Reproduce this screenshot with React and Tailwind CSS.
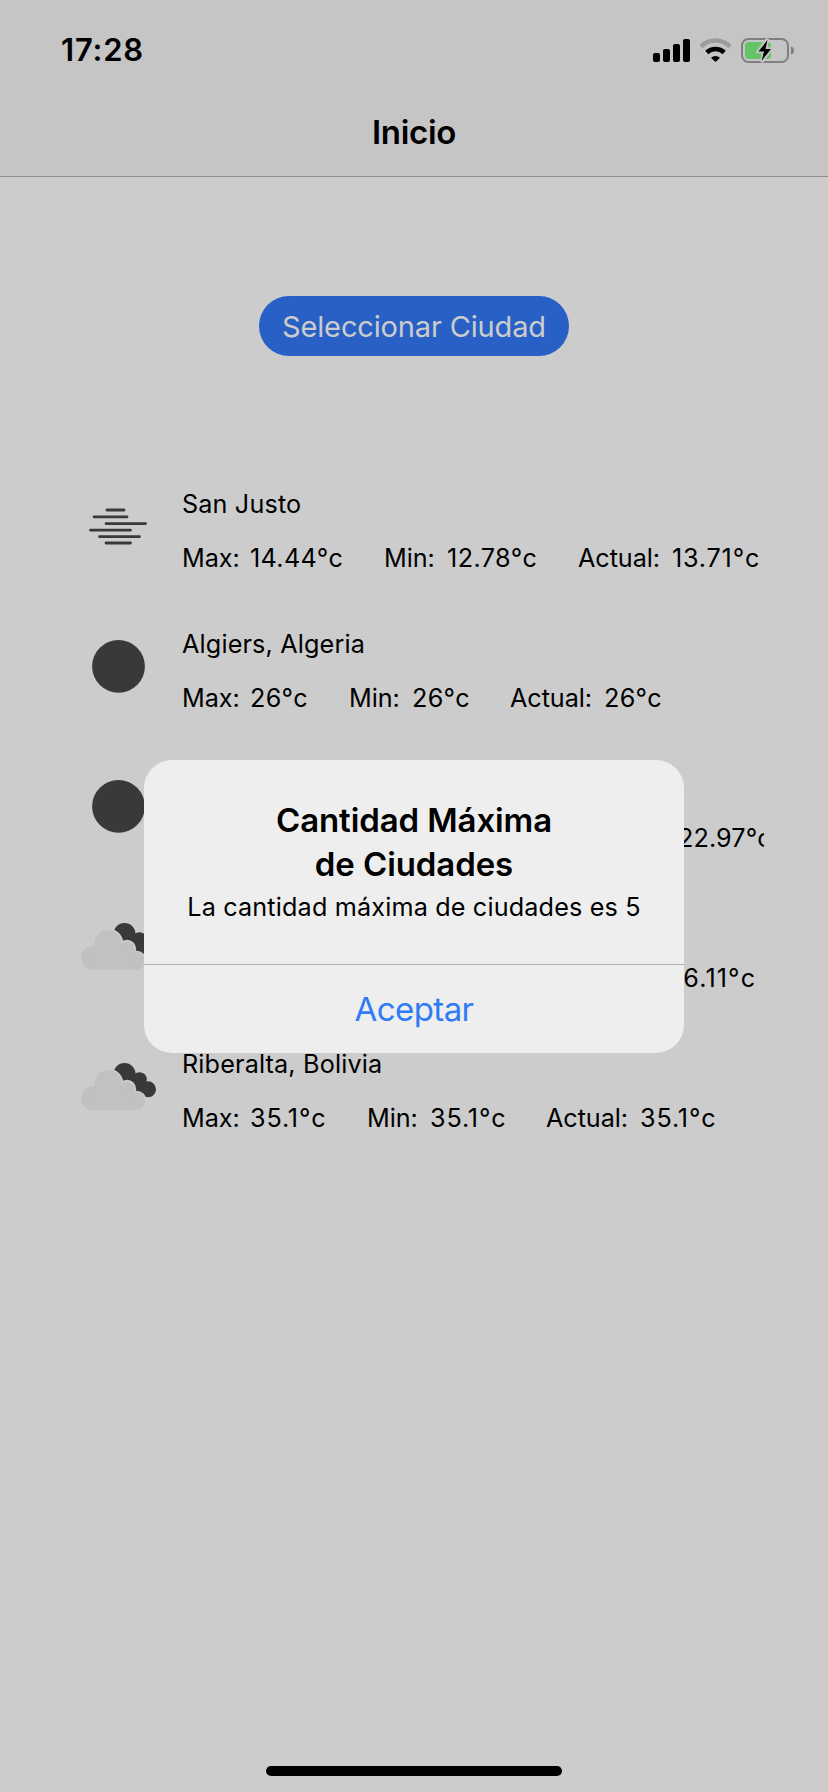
const cities = [
  {
    name: "San Justo",
    icon: "mist",
    readings: [
      { label: "Max", value: "14.44", width: "w-[134px]", tracking: "tracking-[0.35px]" },
      { label: "Min", value: "12.78", width: "w-[131px]", tracking: "tracking-[0.4px]" },
      { label: "Actual", value: "13.71", width: "w-[133px]", tracking: "tracking-[0.8px]" },
    ],
  },
  {
    name: "Algiers, Algeria",
    icon: "moon",
    readings: [
      { label: "Max", value: "26", width: "w-[99px]", tracking: "tracking-[0.3px]" },
      { label: "Min", value: "26", width: "w-[98px]", tracking: "tracking-[0.3px]" },
      { label: "Actual", value: "26", width: "w-[100px]", tracking: "tracking-[0.3px]" },
    ],
  },
  {
    name: "Madrid, España",
    icon: "moon",
    readings: [
      { label: "Max", value: "23.89", width: "w-[136px]", tracking: "tracking-[0.1px]" },
      { label: "Min", value: "22.22", width: "w-[135px]", tracking: "tracking-[0.1px]" },
      { label: "Actual", value: "22.97", width: "w-[133px]", tracking: "tracking-[0.1px]" },
    ],
  },
  {
    name: "Londres, Inglaterra",
    icon: "clouds",
    readings: [
      { label: "Max", value: "17.22", width: "w-[133px]", tracking: "tracking-[0.4px]" },
      { label: "Min", value: "15.56", width: "w-[132px]", tracking: "tracking-[0.4px]" },
      { label: "Actual", value: "16.11", width: "w-[131px]", tracking: "tracking-[1.1px]" },
    ],
  },
  {
    name: "Riberalta, Bolivia",
    icon: "clouds",
    readings: [
      { label: "Max", value: "35.1", width: "w-[117px]", tracking: "tracking-[0.85px]" },
      { label: "Min", value: "35.1", width: "w-[116px]", tracking: "tracking-[0.85px]" },
      { label: "Actual", value: "35.1", width: "w-[118px]", tracking: "tracking-[0.85px]" },
    ],
  },
];

const labelWidths = { Max: "w-[68px]", Min: "w-[63px]", Actual: "w-[94px]" };

function WeatherIcon({ kind }) {
  return (
    <svg className="size-[100px] shrink-0" viewBox="0 0 100 100">
      {kind === "mist" && (
        <path
          d="M39 34H56M26 40.800H59M38 47.600H77.500M22.500 54.200H62.500M31.500 60.600H71.500M38 67H62.500"
          stroke="#39393b"
          strokeWidth="2.8"
          strokeLinecap="round"
        />
      )}
      {kind === "moon" && <circle cx="50.5" cy="50.4" r="26.4" fill="#39393b" />}
      {kind === "clouds" && (
        <>
          <g fill="#39393b">
            <circle cx="56.5" cy="38" r="11" />
            <circle cx="71.500" cy="43.500" r="7.300" />
            <circle cx="80" cy="53.300" r="8" />
            <path d="M60 32L68 42L78 45.500L80 61L70 60L52 46Z" />
          </g>
          <g fill="#cccccc">
            <circle cx="40.500" cy="47.500" r="14.800" />
            <circle cx="59" cy="53" r="9.200" />
            <circle cx="68.500" cy="65" r="10.200" />
          </g>
          <g fill="#c1c1bf">
            <circle cx="25" cy="62" r="12" />
            <circle cx="40" cy="47.500" r="13.400" />
            <circle cx="58.700" cy="54" r="8" />
            <circle cx="68" cy="65" r="9" />
            <path d="M25 74L27 50L52 50L66 58L68 74Z" />
          </g>
        </>
      )}
    </svg>
  );
}

function Reading({ label, value, width, tracking }) {
  return (
    <div className="flex shrink-0">
      <span className={`${labelWidths[label]} shrink-0 tracking-[-0.05px]`}>{label}:</span>
      <span className={`${width} ${tracking} shrink-0`}>{value}°c</span>
    </div>
  );
}

function StatusIcons() {
  return (
    <svg className="h-[30px] w-[150px]" viewBox="650 34 150 30">
      <rect x="653" y="52" width="7" height="9" rx="2" />
      <rect x="663" y="48" width="7" height="13" rx="2" />
      <rect x="673" y="43" width="7" height="18" rx="2" />
      <rect x="683" y="38" width="7" height="23" rx="2" />
      <path d="M701 45.500A20.500 20.500 0 0 1 730 45.500" fill="none" stroke="#9c9c9c" strokeWidth="4.6" />
      <path d="M706.800 51.500A12.500 12.500 0 0 1 724.200 51.500" fill="none" stroke="#000" strokeWidth="4.6" />
      <path d="M715.500 61L711 56.700A6.500 6.500 0 0 1 720 56.700Z" />
      <rect x="742" y="38" width="46" height="23" rx="6.5" fill="none" stroke="#7f7f7f" strokeWidth="2" />
      <rect x="745" y="41" width="26" height="17" rx="3.5" fill="#65c466" />
      <path d="M791 45.500C795 46.500 795 52.500 791 53.500Z" fill="#7f7f7f" />
      <path d="M767.500 38L758.500 50.500H764L761.500 61L771 48H765.500Z" stroke="#c5c5c5" strokeWidth="3.5" />
      <path d="M767.500 39L758.500 50.500H764L761.500 60L771 48H765.500Z" />
    </svg>
  );
}

export default function App() {
  return (
    <div className="relative flex h-[1792px] w-[828px] flex-col overflow-hidden bg-[#cccccc] font-[Inter,sans-serif] text-black">
      <header className="h-[177px] shrink-0 border-b border-[#8f8f8f] bg-[#c5c5c5]">
        <div className="flex h-[100px] items-center justify-between pr-[28px] pl-[61px]">
          <span className="text-[31px] leading-[38px] font-semibold tracking-[0.8px]">17:28</span>
          <StatusIcons />
        </div>
        <h1 className="pt-[12px] text-center text-[33px] leading-[40px] font-semibold tracking-[-0.3px]">Inicio</h1>
      </header>

      <main className="flex flex-1 flex-col items-center">
        <button className="mt-[119px] flex h-[60px] w-[310px] items-center justify-center rounded-full bg-[#2860c5] pt-px text-[29px] tracking-[-0.15px] text-[#cccccc]">
          Seleccionar Ciudad
        </button>
        <ul className="mt-[120px] ml-[68px] w-[696px] self-start overflow-hidden text-[25.2px] leading-[32px]">
          {cities.map((c) => (
            <li key={c.name} className="flex h-[140px] w-full">
              <WeatherIcon kind={c.icon} />
              <div className="ml-[14px] flex flex-col gap-[22px] pt-[12px] whitespace-nowrap">
                <span className="tracking-[0.15px]">{c.name}</span>
                <div className="flex">
                  {c.readings.map((r) => (
                    <Reading key={r.label} {...r} />
                  ))}
                </div>
              </div>
            </li>
          ))}
        </ul>
      </main>

      <div className="absolute top-[760px] left-[144px] flex h-[293px] w-[540px] flex-col rounded-[28px] bg-[#eeeeee] text-center">
        <div className="flex h-[205px] flex-col border-b border-[#b0b0b0] pt-[38px]">
          <h2 className="text-[33px] leading-[44px] font-semibold tracking-[-0.1px]">
            Cantidad Máxima
            <br />
            de Ciudades
          </h2>
          <p className="pt-px text-[25.2px] leading-[40px] tracking-[0.16px]">La cantidad máxima de ciudades es 5</p>
        </div>
        <button className="flex flex-1 items-center justify-center pt-[2px] text-[33px] tracking-[-0.6px] text-[#2f7bf6]">
          Aceptar
        </button>
      </div>

      <div className="absolute bottom-[16px] left-[266px] h-[10px] w-[296px] rounded-full bg-black" />
    </div>
  );
}
